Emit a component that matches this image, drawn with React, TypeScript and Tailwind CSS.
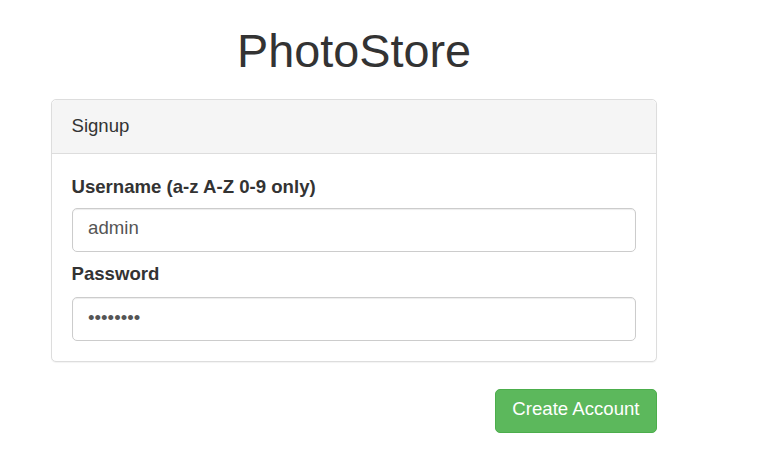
import React from "react";

export default function App() {
  const font = { fontFamily: '"Liberation Sans", Arial, Helvetica, sans-serif' };
  return (
    <div className="min-h-[462px] w-[762px] bg-white text-[#333]" style={font}>
      <div className="w-[606px] ml-[51px] pt-[26px]">
        <h1 className="text-center text-[46.8px] leading-[1.1] font-normal text-[#333] mb-[22px]">PhotoStore</h1>
        <div className="border border-[#ddd] rounded-[5px] bg-white shadow-[0_1px_1px_rgba(0,0,0,0.05)]">
          <div className="bg-[#f5f5f5] border-b border-[#ddd] rounded-t-[5px] px-[19.5px] py-[13px] text-[18.6px] leading-[26.6px]">
            Signup
          </div>
          <div className="pl-[19.5px] pr-[20.5px] pt-[19.5px] pb-[20px]">
            <label className="block font-bold text-[18.6px] leading-[26.6px] mb-[8px]">Username (a-z A-Z 0-9 only)</label>
            <input
              readOnly
              value="admin"
              className="block w-full h-[44px] border border-[#ccc] rounded-[5px] px-[15.6px] pt-0 pb-[4px] text-[18.6px] text-[#555] shadow-[inset_0_1px_1px_rgba(0,0,0,0.075)] outline-none"
              style={font}
            />
            <label className="block font-bold text-[18.6px] leading-[26.6px] mt-[9px] mb-[9px]">Password</label>
            <input
              readOnly
              type="password"
              value="password"
              className="block w-full h-[44px] border border-[#ccc] rounded-[5px] px-[15.6px] pt-0 pb-[2px] text-[18.6px] text-[#555] shadow-[inset_0_1px_1px_rgba(0,0,0,0.075)] outline-none"
              style={font}
            />
          </div>
        </div>
        <div className="flex justify-end mt-[27px]">
          <button
            className="h-[44px] px-[16.5px] pt-0 pb-[4px] bg-[#5cb85c] border border-[#4cae4c] rounded-[5px] text-white text-[18.6px] leading-[26px]"
            style={font}
          >
            Create Account
          </button>
        </div>
      </div>
    </div>
  );
}
